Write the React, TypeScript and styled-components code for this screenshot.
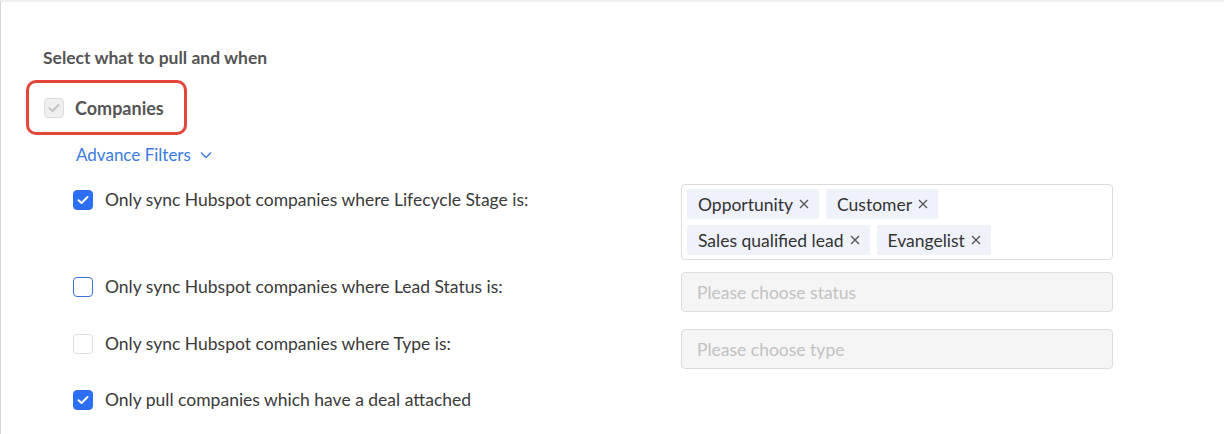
import React from "react";
import styled, { createGlobalStyle } from "styled-components";

const Global = createGlobalStyle`
  html, body { margin: 0; padding: 0; background: #fff; }
  body { font-family: Lato, "Open Sans", sans-serif; color: #333; }
  * { box-sizing: border-box; }
`;

const Page = styled.div`
  width: 1224px;
  height: 434px;
  border-top: 2px solid #f1eff3;
  border-left: 1px solid #d6d6d6;
  padding: 46px 0 0 42px;
  overflow: hidden;
`;

const Heading = styled.div`
  font-size: 17.5px;
  font-weight: 700;
  color: #555;
  line-height: 20px;
`;

const Highlight = styled.div`
  margin: 12px 0 0 -17px;
  width: 161px;
  height: 55px;
  border: 3px solid #e2463b;
  border-radius: 10px;
  display: flex;
  align-items: center;
  padding-left: 15px;
  gap: 11px;
`;

type Variant = "checked" | "focus" | "empty" | "disabled";

const Box = styled.span<{ $variant: Variant }>`
  flex: none;
  width: 20px;
  height: 20px;
  border-radius: 4px;
  display: inline-flex;
  align-items: center;
  justify-content: center;
  background: ${(p) =>
    p.$variant === "checked" ? "#2c6ff2" : p.$variant === "disabled" ? "#efefef" : "#fff"};
  border: 1.5px solid
    ${(p) =>
      p.$variant === "checked"
        ? "#2c6ff2"
        : p.$variant === "focus"
        ? "#3b72d6"
        : p.$variant === "disabled"
        ? "#dcdcdc"
        : "#dedede"};
`;

const Check = ({ color }: { color: string }) => (
  <svg width="12" height="10" viewBox="0 0 12 10" fill="none">
    <path d="M1.5 5.2 L4.6 8 L10.5 2" stroke={color} strokeWidth="2" strokeLinecap="round" strokeLinejoin="round" />
  </svg>
);

const CheckBox = ({ variant }: { variant: Variant }) => (
  <Box $variant={variant}>
    {variant === "checked" && <Check color="#fff" />}
    {variant === "disabled" && <Check color="#c4c4c4" />}
  </Box>
);

const MainLabel = styled.span`
  font-size: 18px;
  font-weight: 700;
  color: #555;
`;

const FilterToggle = styled.div`
  margin: 10px 0 0 33px;
  display: flex;
  align-items: center;
  gap: 9px;
  color: #3a7be0;
  font-size: 17px;
  line-height: 20px;
`;

const Rows = styled.div`
  margin: 19px 0 0 30px;
  display: grid;
  grid-template-columns: 608px 432px;
  row-gap: 12px;
`;

const LabelCell = styled.div<{ $top: number }>`
  display: flex;
  align-items: flex-start;
  gap: 12px;
  padding-top: ${(p) => p.$top}px;
  font-size: 17.5px;
  line-height: 20px;
  color: #3a3a3a;
`;

const MultiSelect = styled.div`
  border: 1px solid #dcdcdc;
  border-radius: 4px;
  padding: 4px 5px 4px;
  display: flex;
  flex-wrap: wrap;
  gap: 6px 7px;
  width: 432px;
  height: 76px;
  align-content: flex-start;
`;

const Tag = styled.span`
  display: inline-flex;
  align-items: center;
  height: 30px;
  padding: 0 10px 0 11px;
  gap: 6px;
  background: #eff1fb;
  border-radius: 2px;
  font-size: 17.5px;
  color: #333;
`;

const Close = () => (
  <svg width="10" height="10" viewBox="0 0 10 10">
    <path d="M1 1 L9 9 M9 1 L1 9" stroke="#555" strokeWidth="1.3" />
  </svg>
);

const Input = styled.div<{ $offset?: number }>`
  width: 432px;
  height: 40px;
  margin-top: ${(p) => p.$offset ?? 0}px;
  border: 1px solid #dcdcdc;
  border-radius: 4px;
  background: #f5f5f5;
  padding-left: 15px;
  display: flex;
  align-items: center;
  font-size: 17.5px;
  color: #c2c2c2;
`;

const OffsetLabel = styled(LabelCell)`
  margin-top: 5px;
`;

const Spacer = styled.div``;

export default function App() {
  const tags = ["Opportunity", "Customer", "Sales qualified lead", "Evangelist"];
  return (
    <>
      <Global />
      <Page>
        <Heading>Select what to pull and when</Heading>
        <Highlight>
          <CheckBox variant="disabled" />
          <MainLabel>Companies</MainLabel>
        </Highlight>
        <FilterToggle>
          Advance Filters
          <svg width="12" height="8" viewBox="0 0 12 8" fill="none">
            <path d="M1 1.5 L6 6.5 L11 1.5" stroke="#3a7be0" strokeWidth="1.4" />
          </svg>
        </FilterToggle>
        <Rows>
          <LabelCell $top={6}>
            <CheckBox variant="checked" />
            Only sync Hubspot companies where Lifecycle Stage is:
          </LabelCell>
          <MultiSelect>
            {tags.map((t) => (
              <Tag key={t}>
                {t}
                <Close />
              </Tag>
            ))}
          </MultiSelect>
          <LabelCell $top={5}>
            <CheckBox variant="focus" />
            Only sync Hubspot companies where Lead Status is:
          </LabelCell>
          <Input>Please choose status</Input>
          <OffsetLabel $top={5}>
            <CheckBox variant="empty" />
            Only sync Hubspot companies where Type is:
          </OffsetLabel>
          <Input $offset={5}>Please choose type</Input>
          <LabelCell $top={9}>
            <CheckBox variant="checked" />
            Only pull companies which have a deal attached
          </LabelCell>
          <Spacer />
        </Rows>
      </Page>
    </>
  );
}
